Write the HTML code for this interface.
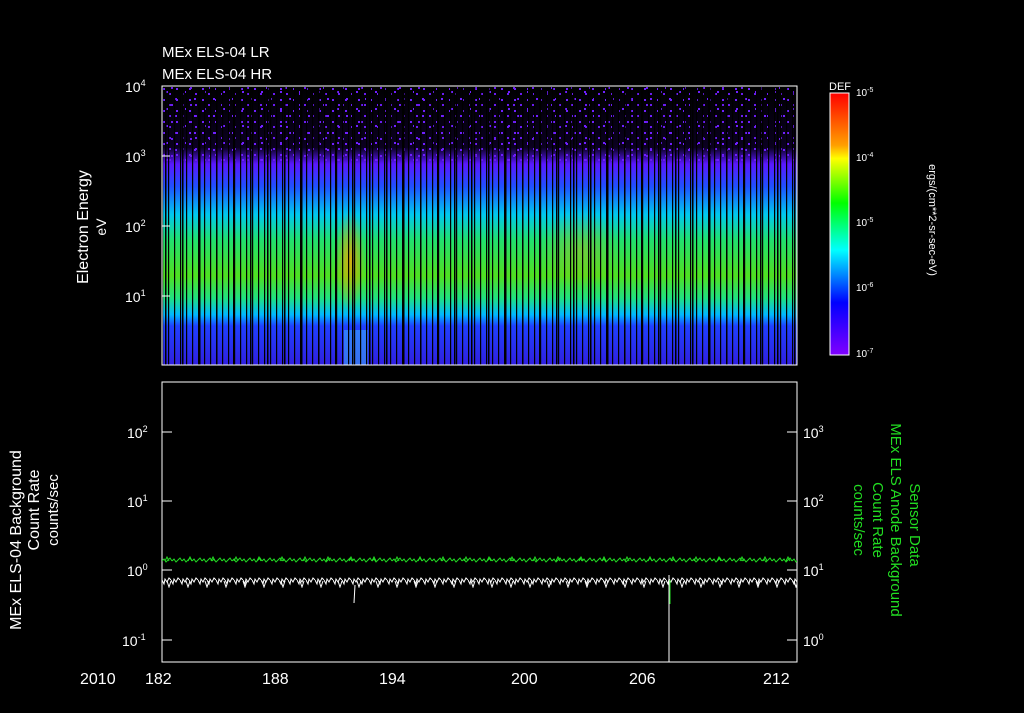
<!DOCTYPE html>
<html><head><style>
body{margin:0;background:#000;width:1024px;height:708px;overflow:hidden;font-family:"Liberation Sans",sans-serif;color:#fff}
svg text{font-family:"Liberation Sans",sans-serif}
</style></head><body>
<svg width="1024" height="708" xmlns="http://www.w3.org/2000/svg">
<defs>
<linearGradient id="spec" x1="0" y1="0" x2="0" y2="1">
<stop offset="0" stop-color="#000"/>
<stop offset="0.22" stop-color="#0a0020"/>
<stop offset="0.28" stop-color="#5a18ff"/>
<stop offset="0.36" stop-color="#2050ff"/>
<stop offset="0.46" stop-color="#00c8f0"/>
<stop offset="0.55" stop-color="#20e070"/>
<stop offset="0.68" stop-color="#50e020"/>
<stop offset="0.76" stop-color="#20e080"/>
<stop offset="0.82" stop-color="#00b8ff"/>
<stop offset="0.86" stop-color="#2040ff"/>
<stop offset="1" stop-color="#3020e0"/>
</linearGradient>
<linearGradient id="cb" x1="0" y1="0" x2="0" y2="1">
<stop offset="0" stop-color="#ff0000"/>
<stop offset="0.2" stop-color="#ffa000"/>
<stop offset="0.25" stop-color="#ffff00"/>
<stop offset="0.42" stop-color="#00ff00"/>
<stop offset="0.6" stop-color="#00ffff"/>
<stop offset="0.8" stop-color="#0000ff"/>
<stop offset="1" stop-color="#8000ff"/>
</linearGradient>
<pattern id="stripes" x="162" width="6" height="10" patternUnits="userSpaceOnUse">
<rect x="0" y="0" width="1.2" height="10" fill="#000"/>
</pattern>
<pattern id="stripes2" x="165" width="17" height="10" patternUnits="userSpaceOnUse">
<rect x="0" y="0" width="1.5" height="10" fill="#000"/>
</pattern>
<pattern id="dots" x="162" y="86" width="13" height="11" patternUnits="userSpaceOnUse">
<rect x="1" y="2" width="2" height="2" fill="#7020ff"/>
<rect x="7" y="7" width="2" height="2" fill="#6a1cf0"/>
</pattern>
<pattern id="dots2" x="162" y="86" width="19" height="17" patternUnits="userSpaceOnUse">
<rect x="4" y="5" width="2" height="2" fill="#7020ff"/>
<rect x="13" y="12" width="2" height="2" fill="#7020ff"/>
<rect x="9" y="1" width="2" height="2" fill="#6a1cf0"/>
</pattern>
<pattern id="gz" x="162" y="556" width="10" height="9" patternUnits="userSpaceOnUse">
<polyline points="0,5 2,3 4,6 6,4 8,2 10,5" fill="none" stroke="#22dd22" stroke-width="1"/>
</pattern>
<pattern id="gz2" x="162" y="556" width="23" height="9" patternUnits="userSpaceOnUse">
<polyline points="3,5 5,1 7,5" fill="none" stroke="#22dd22" stroke-width="1"/>
</pattern>
<pattern id="wz" x="162" y="576" width="9" height="12" patternUnits="userSpaceOnUse">
<polyline points="0,4 2,8 3,3 5,6 7,2 9,4" fill="none" stroke="#fff" stroke-width="1"/>
</pattern>
<pattern id="wz2" x="162" y="576" width="19" height="12" patternUnits="userSpaceOnUse">
<polyline points="5,5 7,11 9,5" fill="none" stroke="#fff" stroke-width="1"/>
</pattern>
<radialGradient id="hot" cx="0.5" cy="0.5" r="0.5">
<stop offset="0" stop-color="#ffa000" stop-opacity="0.8"/>
<stop offset="1" stop-color="#ffa000" stop-opacity="0"/>
</radialGradient>
</defs>
<rect x="162" y="86" width="635" height="279" fill="url(#spec)"/>
<rect x="162" y="86" width="635" height="78" fill="url(#dots)"/>
<rect x="162" y="86" width="635" height="78" fill="url(#dots2)"/>
<ellipse cx="350" cy="260" rx="15" ry="50" fill="url(#hot)"/>
<ellipse cx="580" cy="250" rx="40" ry="40" fill="url(#hot)" opacity="0.4"/>
<rect x="344" y="330" width="24" height="35" fill="#40c0ff" opacity="0.5"/>
<rect x="162" y="86" width="635" height="279" fill="url(#stripes)"/>
<rect x="162" y="86" width="635" height="279" fill="url(#stripes2)"/>
<rect x="162" y="86" width="635" height="279" fill="none" stroke="#fff" stroke-width="1"/>
<g stroke="#fff">
<line x1="162" y1="86" x2="170" y2="86"/><line x1="162" y1="156" x2="170" y2="156"/><line x1="162" y1="226" x2="170" y2="226"/><line x1="162" y1="296" x2="170" y2="296"/>
</g>
<g fill="#fff" font-size="14">
<text x="125" y="92">10<tspan font-size="9" dy="-6">4</tspan></text>
<text x="125" y="162">10<tspan font-size="9" dy="-6">3</tspan></text>
<text x="125" y="232">10<tspan font-size="9" dy="-6">2</tspan></text>
<text x="125" y="302">10<tspan font-size="9" dy="-6">1</tspan></text>
<text x="162" y="57" font-size="15">MEx ELS-04 LR</text>
<text x="162" y="79" font-size="15">MEx ELS-04 HR</text>
<text transform="translate(88,227) rotate(-90)" text-anchor="middle" font-size="16">Electron Energy</text>
<text transform="translate(106,227) rotate(-90)" text-anchor="middle" font-size="14">eV</text>
</g>
<rect x="830" y="93" width="19" height="262" fill="url(#cb)" stroke="#fff"/>
<g fill="#fff" font-size="10">
<text x="829" y="90" font-size="11">DEF</text>
<text x="856" y="96">10<tspan font-size="7" dy="-4">-5</tspan></text>
<text x="856" y="161">10<tspan font-size="7" dy="-4">-4</tspan></text>
<text x="856" y="226">10<tspan font-size="7" dy="-4">-5</tspan></text>
<text x="856" y="291">10<tspan font-size="7" dy="-4">-6</tspan></text>
<text x="856" y="357">10<tspan font-size="7" dy="-4">-7</tspan></text>
<text transform="translate(929,220) rotate(90)" text-anchor="middle" font-size="11">ergs/(cm**2-sr-sec-eV)</text>
</g>
<rect x="162" y="382" width="635" height="280" fill="#000" stroke="#fff"/>
<rect x="162" y="556" width="635" height="9" fill="url(#gz)"/>
<rect x="162" y="556" width="635" height="9" fill="url(#gz2)"/>
<rect x="162" y="576" width="635" height="12" fill="url(#wz)"/>
<rect x="162" y="576" width="635" height="12" fill="url(#wz2)"/>
<line x1="669" y1="575" x2="669" y2="662" stroke="#fff"/>
<line x1="670" y1="580" x2="670" y2="604" stroke="#22dd22"/>
<line x1="355" y1="585" x2="354" y2="603" stroke="#fff"/>
<g stroke="#fff">
<line x1="162" y1="432" x2="172" y2="432"/><line x1="162" y1="501" x2="172" y2="501"/><line x1="162" y1="570" x2="172" y2="570"/><line x1="162" y1="640" x2="172" y2="640"/>
<line x1="797" y1="432" x2="787" y2="432"/><line x1="797" y1="501" x2="787" y2="501"/><line x1="797" y1="570" x2="787" y2="570"/><line x1="797" y1="640" x2="787" y2="640"/>
</g>
<g fill="#fff" font-size="14">
<text x="127" y="438">10<tspan font-size="9" dy="-6">2</tspan></text>
<text x="127" y="507">10<tspan font-size="9" dy="-6">1</tspan></text>
<text x="127" y="576">10<tspan font-size="9" dy="-6">0</tspan></text>
<text x="122" y="646">10<tspan font-size="9" dy="-6">-1</tspan></text>
<text x="803" y="438">10<tspan font-size="9" dy="-6">3</tspan></text>
<text x="803" y="507">10<tspan font-size="9" dy="-6">2</tspan></text>
<text x="803" y="576">10<tspan font-size="9" dy="-6">1</tspan></text>
<text x="803" y="646">10<tspan font-size="9" dy="-6">0</tspan></text>
<text transform="translate(21,540) rotate(-90)" text-anchor="middle" font-size="16">MEx ELS-04 Background</text>
<text transform="translate(39,510) rotate(-90)" text-anchor="middle" font-size="16">Count Rate</text>
<text transform="translate(58,510) rotate(-90)" text-anchor="middle" font-size="15">counts/sec</text>
</g>
<g fill="#22dd22" font-size="15">
<text transform="translate(910,525) rotate(90)" text-anchor="middle">Sensor Data</text>
<text transform="translate(891,520) rotate(90)" text-anchor="middle">MEx ELS Anode Background</text>
<text transform="translate(873,520) rotate(90)" text-anchor="middle">Count Rate</text>
<text transform="translate(854,520) rotate(90)" text-anchor="middle">counts/sec</text>
</g>
<g fill="#fff" font-size="16">
<text x="80" y="684">2010</text>
<text x="145" y="684">182</text>
<text x="262" y="684">188</text>
<text x="379" y="684">194</text>
<text x="511" y="684">200</text>
<text x="629" y="684">206</text>
<text x="763" y="684">212</text>
</g>
</svg>
</body></html>
